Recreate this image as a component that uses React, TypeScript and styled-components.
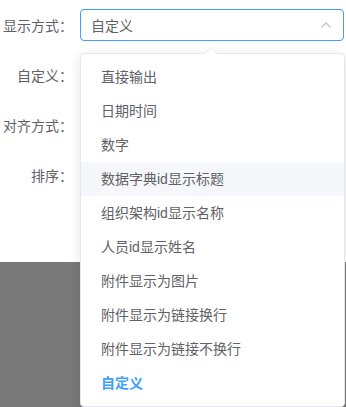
import styled, { createGlobalStyle } from "styled-components";

const GlobalStyle = createGlobalStyle`
  body {
    margin: 0;
    background: #fff;
    font-family: "Liberation Sans", "Noto Sans CJK SC", sans-serif;
  }
`;

const Page = styled.div`
  position: relative;
  width: 346px;
  height: 407px;
  overflow: hidden;
`;

const Form = styled.div`
  padding: 9px 2px 71px 0;
  display: flex;
  flex-direction: column;
  gap: 18px;
`;

const Row = styled.div`
  display: flex;
  align-items: center;
  height: 32px;
`;

const Label = styled.label`
  width: 80px;
  box-sizing: border-box;
  padding-right: 7px;
  text-align: right;
  font-size: 14px;
  color: #606266;
  white-space: nowrap;
`;

const SelectBox = styled.div`
  flex: 1;
  height: 32px;
  box-sizing: border-box;
  border: 1px solid #409eff;
  border-radius: 4px;
  display: flex;
  align-items: center;
  justify-content: space-between;
  padding: 0 10px 0 10px;
  font-size: 14px;
  color: #606266;
`;

const Shade = styled.div`
  height: 145px;
  background: #787878;
`;

const Dropdown = styled.div`
  position: absolute;
  top: 53px;
  left: 80px;
  width: 265px;
  box-sizing: border-box;
  background: #fff;
  border: 1px solid #e4e7ed;
  border-radius: 4px;
  box-shadow: 0 2px 12px rgba(0, 0, 0, 0.1);
  padding: 6px 0;
`;

const Arrow = styled.div`
  position: absolute;
  top: -7px;
  left: 124px;
  width: 0;
  height: 0;
  border-left: 6px solid transparent;
  border-right: 6px solid transparent;
  border-bottom: 6px solid #e4e7ed;
  &::after {
    content: "";
    position: absolute;
    left: -6px;
    top: 1px;
    border-left: 6px solid transparent;
    border-right: 6px solid transparent;
    border-bottom: 6px solid #fff;
  }
`;

const Option = styled.div<{ $hover?: boolean; $selected?: boolean }>`
  height: 34px;
  line-height: 34px;
  padding: 0 20px;
  font-size: 14px;
  color: ${(p) => (p.$selected ? "#409eff" : "#606266")};
  font-weight: ${(p) => (p.$selected ? 700 : 400)};
  background: ${(p) => (p.$hover ? "#f5f7fa" : "transparent")};
  white-space: nowrap;
`;

const options = [
  "直接输出",
  "日期时间",
  "数字",
  "数据字典id显示标题",
  "组织架构id显示名称",
  "人员id显示姓名",
  "附件显示为图片",
  "附件显示为链接换行",
  "附件显示为链接不换行",
  "自定义",
];

function ChevronUp() {
  return (
    <svg width="14" height="14" viewBox="0 0 14 14">
      <path d="M2.5 9.5 L7 5 L11.5 9.5" fill="none" stroke="#c0c4cc" strokeWidth="1.3" />
    </svg>
  );
}

export default function App() {
  return (
    <Page>
      <GlobalStyle />
      <Form>
        <Row>
          <Label>显示方式：</Label>
          <SelectBox>
            <span>自定义</span>
            <ChevronUp />
          </SelectBox>
        </Row>
        <Row>
          <Label>自定义：</Label>
        </Row>
        <Row>
          <Label>对齐方式：</Label>
        </Row>
        <Row>
          <Label>排序：</Label>
        </Row>
      </Form>
      <Shade />
      <Dropdown>
        <Arrow />
        {options.map((o, i) => (
          <Option key={o} $hover={i === 3} $selected={i === options.length - 1}>
            {o}
          </Option>
        ))}
      </Dropdown>
    </Page>
  );
}
